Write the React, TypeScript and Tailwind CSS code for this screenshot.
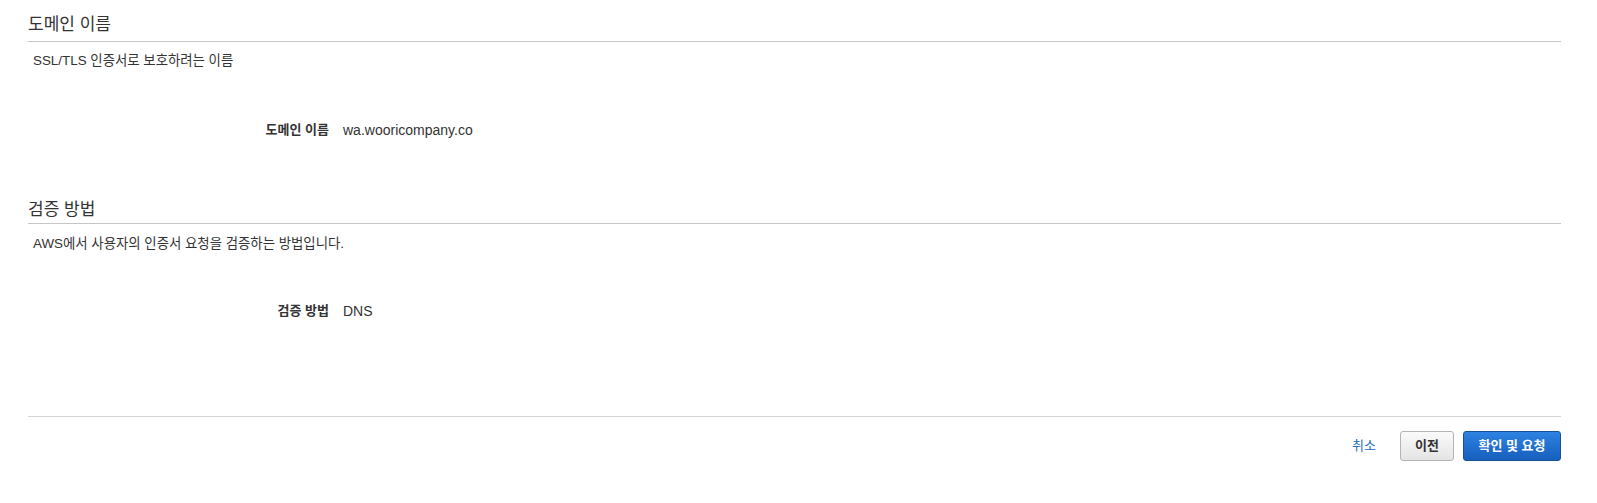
import React from 'react';

const font = { fontFamily: '"Liberation Sans", "Noto Sans CJK KR", sans-serif' };

const Field: React.FC<{ label: string; value: string; className?: string }> = ({ label, value, className }) => (
  <div className={`flex items-center h-[20px] text-[#333] ${className ?? ''}`}>
    <div className="w-[301px] text-right font-bold text-[13px]">{label}</div>
    <div className="pl-[14px] text-[14px]">{value}</div>
  </div>
);

const App: React.FC = () => {
  return (
    <div className="w-[1597px] h-[503px] bg-white pl-[28px] pr-[36px] pt-[13px]" style={font}>
      {/* 도메인 이름 */}
      <h2 className="text-[17px] leading-[24px] text-[#333] pb-[4px] border-b border-[#c6c6c6]">도메인 이름</h2>
      <p className="mt-[9px] pl-[5px] text-[13.4px] leading-[20px] text-[#333]">SSL/TLS 인증서로 보호하려는 이름</p>
      <Field label="도메인 이름" value="wa.wooricompany.co" className="mt-[49px]" />

      {/* 검증 방법 */}
      <h2 className="mt-[58px] text-[17px] leading-[24px] text-[#333] pb-[1px] border-b border-[#c6c6c6]">검증 방법</h2>
      <p className="mt-[10px] pl-[5px] text-[13.4px] leading-[20px] text-[#333]">AWS에서 사용자의 인증서 요청을 검증하는 방법입니다.</p>
      <Field label="검증 방법" value="DNS" className="mt-[47px]" />

      {/* footer */}
      <div className="mt-[95px] border-t border-[#d5d5d5] pt-[14px] flex justify-end items-center">
        <a className="text-[13px] text-[#1d6bc4] mr-[24px] cursor-pointer">취소</a>
        <button className="w-[54px] h-[30px] rounded-[3px] border border-[#b4b4b4] bg-gradient-to-b from-[#fafafa] to-[#e4e4e4] text-[13px] font-bold text-[#333]">
          이전
        </button>
        <button className="ml-[9px] w-[98px] h-[30px] rounded-[3px] border border-[#1a4e95] bg-gradient-to-b from-[#2d82e2] to-[#175fbd] text-[13px] font-bold text-white">
          확인 및 요청
        </button>
      </div>
    </div>
  );
};

export default App;
